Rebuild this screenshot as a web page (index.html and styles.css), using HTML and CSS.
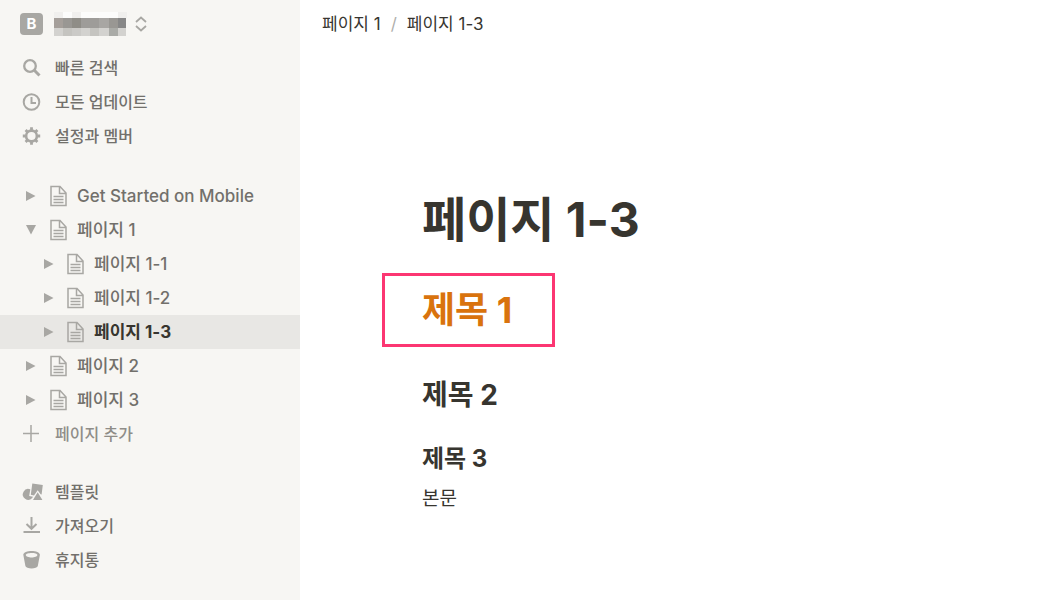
FILE: index.html
```
<!DOCTYPE html>
<html lang="ko">
<head>
  <meta charset="UTF-8" />
  <meta name="viewport" content="width=device-width, initial-scale=1.0">
  <title>페이지 1-3</title>
  <link rel="stylesheet" href="styles.css">
</head>
<body>
  <!-- Shared icons -->
  <svg class="sprite" aria-hidden="true">
    <symbol id="page" viewBox="0 0 18 22">
      <path d="M1 1.5H10L16 8V20.5H1Z M9.5 1.5V8.5H16" fill="none" stroke="currentColor" stroke-width="1.5" />
      <path d="M3.5 11.5H13.5M3.5 14.5H13.5M3.5 17.5H13.5" stroke="currentColor" stroke-width="1.5" />
    </symbol>
    <symbol id="arrow" viewBox="0 0 10 10">
      <path d="M0 0L9.5 5L0 10Z" fill="currentColor" />
    </symbol>
  </svg>

  <!-- Sidebar -->
  <aside class="sidebar">
    <button class="workspace" aria-label="Workspace">
      <span class="badge">B</span>
      <svg class="workspace-name" viewBox="0 0 74 25" shape-rendering="crispEdges">
        <path fill="#f0efed" d="M0 0h9v6h-9zM18 0h9v6h-9zM64 0h9v6h-9z" />
        <path fill="#fcfcfb" d="M9 0h9v6h-9zM27 0h37v6h-37z" />
        <path fill="#a59f9a" d="M0 6h9v10h-9z" />
        <path fill="#999793" d="M9 6h9v10h-9zM55 6h9v10h-9z" />
        <path fill="#8f8d87" d="M18 6h9v10h-9z" />
        <path fill="#9e9c99" d="M27 6h18v10h-18z" />
        <path fill="#a8a6a3" d="M45 6h10v10h-10z" />
        <path fill="#878787" d="M64 6h8v10h-8z" />
        <path fill="#d3d2cf" d="M0 16h9v8h-9zM27 16h9v8h-9zM45 16h10v8h-10zM64 16h8v8h-8z" />
        <path fill="#c5c4c0" d="M9 16h9v8h-9zM36 16h9v8h-9z" />
        <path fill="#cbcac7" d="M18 16h9v8h-9z" />
        <path fill="#aaaba7" d="M55 16h9v8h-9z" />
      </svg>
      <svg class="chevrons" viewBox="0 0 12 16" fill="none" stroke="currentColor" stroke-width="1.8">
        <path d="M1 6L6 1.5L11 6M1 10L6 14.5L11 10" />
      </svg>
    </button>

    <nav class="menu">
      <a href="#search">
        <svg class="icon" viewBox="0 0 20 20" fill="none" stroke="currentColor"><circle cx="8" cy="8" r="5.8" stroke-width="2.3" /><path d="M12.3 12.3L17.5 17.5" stroke-width="3" /></svg>
        빠른 검색
      </a>
      <a href="#updates">
        <svg class="icon" viewBox="0 0 20 20" fill="none" stroke="currentColor" stroke-width="2"><circle cx="9.5" cy="10" r="7.8" /><path d="M9.5 5V11H14" /></svg>
        모든 업데이트
      </a>
      <a href="#settings">
        <svg class="icon" viewBox="0 0 20 20" fill="none" stroke="currentColor">
          <circle cx="9.5" cy="10" r="5.4" stroke-width="2.6" />
          <path d="M9.5 1.3V4M9.5 16V18.7M0.8 10H3.5M15.5 10H18.2M3.6 4.1L5.3 5.8M13.7 14.2L15.4 15.9M15.4 4.1L13.7 5.8M5.3 14.2L3.6 15.9" stroke-width="2.8" />
        </svg>
        설정과 멤버
      </a>
    </nav>

    <nav class="tree">
      <a href="#start"><svg class="arrow"><use href="#arrow" /></svg><svg class="page"><use href="#page" /></svg>Get Started on Mobile</a>
      <a href="#page1"><svg class="arrow open"><use href="#arrow" /></svg><svg class="page"><use href="#page" /></svg>페이지 1</a>
      <a href="#page1-1" class="child"><svg class="arrow"><use href="#arrow" /></svg><svg class="page"><use href="#page" /></svg>페이지 1-1</a>
      <a href="#page1-2" class="child"><svg class="arrow"><use href="#arrow" /></svg><svg class="page"><use href="#page" /></svg>페이지 1-2</a>
      <a href="#page1-3" class="child active"><svg class="arrow"><use href="#arrow" /></svg><svg class="page"><use href="#page" /></svg>페이지 1-3</a>
      <a href="#page2"><svg class="arrow"><use href="#arrow" /></svg><svg class="page"><use href="#page" /></svg>페이지 2</a>
      <a href="#page3"><svg class="arrow"><use href="#arrow" /></svg><svg class="page"><use href="#page" /></svg>페이지 3</a>
    </nav>

    <nav class="menu">
      <button class="add">
        <svg class="icon" viewBox="0 0 20 20" stroke="currentColor" stroke-width="1.5"><path d="M9 1V18M1 9.5H17" /></svg>
        페이지 추가
      </button>
    </nav>

    <nav class="menu bottom">
      <a href="#templates">
        <svg class="icon" viewBox="0 0 20 20" fill="currentColor">
          <path d="M10.3 1.5L20.8 3L19.6 12.5L18.6 12.3L15.7 8.2L12 13.5L8.8 12.8Z" />
          <path d="M8.3 7.3A5.4 5.4 0 1 0 10.2 16L11 14.7L7.2 14Z" />
          <path d="M15.7 10.3L20.4 18H11Z" />
        </svg>
        템플릿
      </a>
      <a href="#import">
        <svg class="icon" viewBox="0 0 20 20" fill="none" stroke="currentColor" stroke-width="2"><path d="M9.5 1V13M4.5 8L9.5 12.8L14.5 8M1.5 16H18" /></svg>
        가져오기
      </a>
      <a href="#trash">
        <svg class="icon" viewBox="0 0 20 20" fill="currentColor">
          <path fill-rule="evenodd" d="M1.3 4.8C1.3 -0.3 17.9 -0.3 17.9 4.8L15.8 16C15.2 19.3 4 19.3 3.4 16ZM3.8 5C3.8 8.3 15.4 8.3 15.4 5C15.4 2.3 3.8 2.3 3.8 5Z" />
        </svg>
        휴지통
      </a>
    </nav>
  </aside>

  <!-- Page content -->
  <main>
    <header class="breadcrumb">
      <a href="#page1">페이지 1</a>
      <span>/</span>
      <a href="#page1-3">페이지 1-3</a>
    </header>
    <article>
      <h1>페이지 1-3</h1>
      <div class="highlight">
        <h2>제목 1</h2>
      </div>
      <h3>제목 2</h3>
      <h4>제목 3</h4>
      <p>본문</p>
    </article>
  </main>
</body>
</html>
```
FILE: styles.css
```
* {
  box-sizing: border-box;
}
body {
  display: flex;
  min-height: 100vh;
  margin: 0;
  font-family: Inter, "Noto Sans CJK KR", sans-serif;
  font-size: 16px;
  color: #37352f;
  background: #fff;
}
a {
  color: inherit;
  text-decoration: none;
}
button {
  border: 0;
  padding: 0;
  background: none;
  font: inherit;
  cursor: pointer;
}
svg {
  flex-shrink: 0;
  color: #a8a7a3;
}
.sprite {
  position: absolute;
  width: 0;
  height: 0;
}

/* Sidebar */
.sidebar {
  width: 300px;
  flex-shrink: 0;
  background: #f7f6f3;
  color: #72706b;
  font-weight: 500;
}
.workspace {
  display: flex;
  align-items: center;
  height: 48px;
  margin-bottom: 3px;
  padding-left: 20px;
}
.badge {
  width: 23px;
  margin-right: 11px;
  border-radius: 4px;
  background: #a8a7a3;
  color: #fff;
  font-size: 15px;
  font-weight: 700;
  line-height: 22px;
}
.workspace-name {
  width: 74px;
  height: 25px;
}
.chevrons {
  width: 12px;
  height: 16px;
  margin-left: 7px;
}
.menu a, .add, .tree a {
  display: flex;
  align-items: center;
  width: 100%;
  height: 34px;
  line-height: 24px;
}
.menu a, .add {
  gap: 13px;
  padding-left: 22px;
}
.icon {
  width: 20px;
  height: 20px;
  overflow: visible;
}
.tree {
  margin-top: 26px;
  font-size: 17px;
}
.tree a {
  padding-left: 26px;
}
.tree .child {
  padding-left: 44px;
}
.tree .active {
  background: #e8e7e4;
  color: #37352f;
  font-weight: 700;
}
.arrow {
  width: 10px;
  height: 10px;
}
.open {
  transform: rotate(90deg);
}
.page {
  width: 18px;
  height: 22px;
  margin: 0 9px 0 14px;
}
.child .page {
  margin-left: 13px;
}
.add {
  color: #8f8d88;
}
.bottom {
  margin-top: 24px;
}

/* Page content */
main {
  flex: 1;
}
.breadcrumb {
  display: flex;
  gap: 10px;
  padding: 12px 22px;
  font-size: 17px;
  line-height: 24px;
}
.breadcrumb span {
  color: #b0afac;
}
article {
  padding: 137px 122px 40px;
}
h1, h2, h3, h4, p {
  margin: 0;
}
h1 {
  font-size: 48px;
  line-height: 70px;
}
.highlight {
  width: fit-content;
  margin: 18px 0 0 -40px;
  padding: 8px 40px 8px 37px;
  border: 3px solid #fc3672;
}
h2 {
  color: #d9730d;
  font-size: 36px;
  line-height: 52px;
}
h3 {
  margin-top: 28px;
  font-size: 28px;
  line-height: 40px;
}
h4 {
  margin-top: 26px;
  font-size: 24px;
  line-height: 36px;
}
p {
  margin-top: 8px;
  font-size: 19px;
  line-height: 28px;
}
```
